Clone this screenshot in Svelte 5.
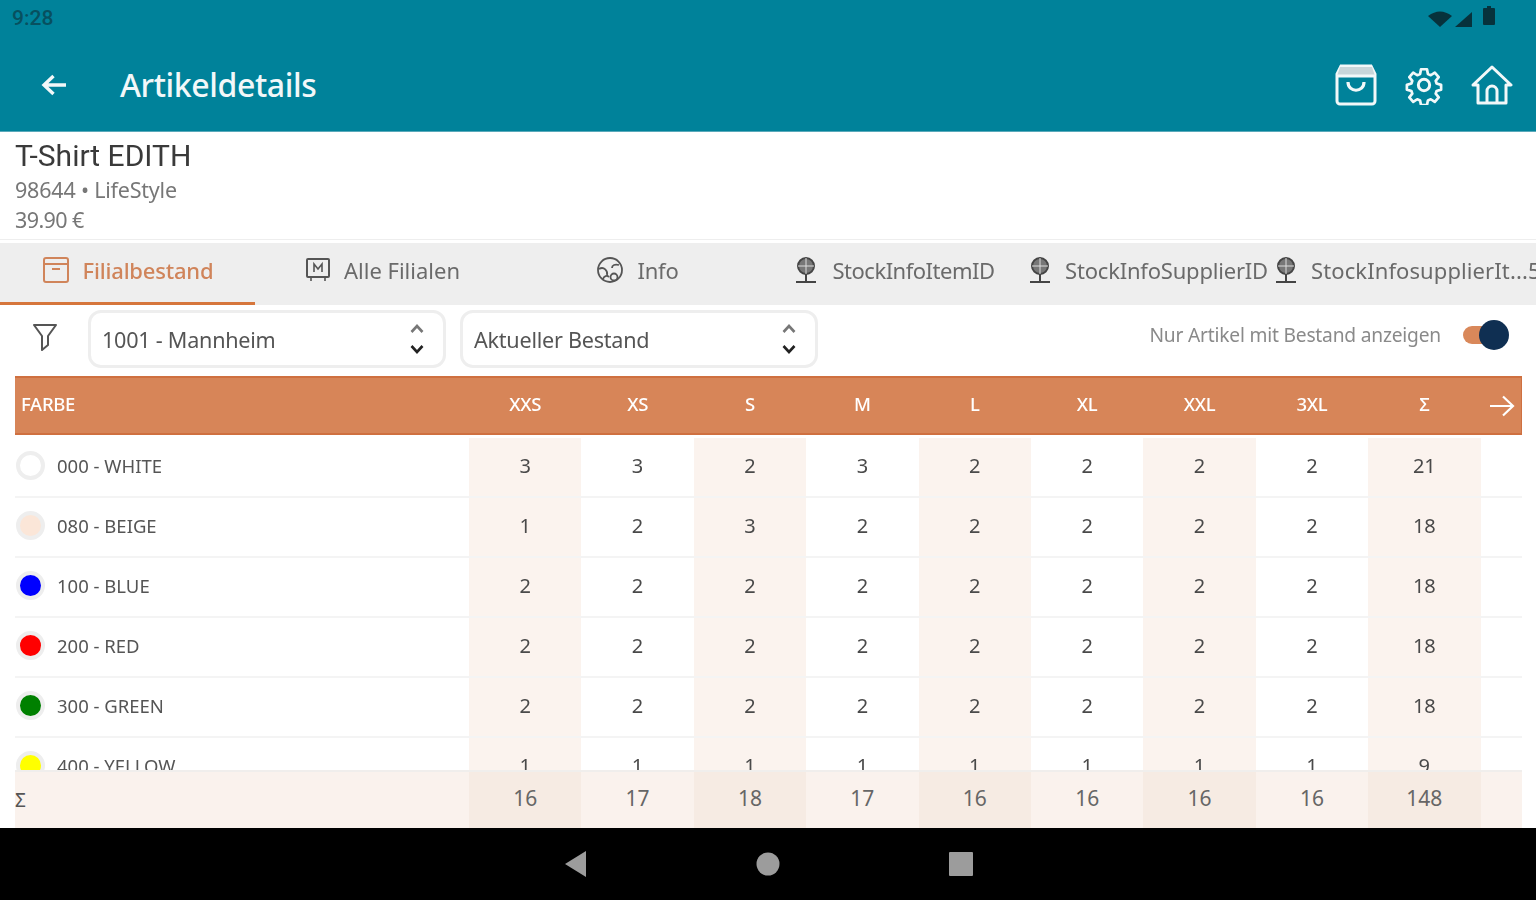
<script>
  const sizes = ['XXS','XS','S','M','L','XL','XXL','3XL','Σ'];
  const rows = [
    { name:'000 - WHITE', color:'#ffffff', vals:[3,3,2,3,2,2,2,2,21] },
    { name:'080 - BEIGE', color:'#fbe6d8', vals:[1,2,3,2,2,2,2,2,18] },
    { name:'100 - BLUE', color:'#0000ff', vals:[2,2,2,2,2,2,2,2,18] },
    { name:'200 - RED', color:'#ff0000', vals:[2,2,2,2,2,2,2,2,18] },
    { name:'300 - GREEN', color:'#008000', vals:[2,2,2,2,2,2,2,2,18] },
    { name:'400 - YELLOW', color:'#ffff00', vals:[1,1,1,1,1,1,1,1,9] }
  ];
  const totals = [16,17,18,17,16,16,16,16,148];
  const tabs = [
    { label:'Filialbestand', icon:'box', cls:'t1' },
    { label:'Alle Filialen', icon:'board', cls:'t2' },
    { label:'Info', icon:'info', cls:'t3' },
    { label:'StockInfoItemID', icon:'globe', cls:'t4' },
    { label:'StockInfoSupplierID', icon:'globe', cls:'t5' },
    { label:'StockInfosupplierIt...5', icon:'globe', cls:'t6' }
  ];
</script>

<div class="page">
  <header class="appbar">
    <div class="status">
      <span class="time">9:28</span>
      <div class="sysicons">
        <svg class="wifi" width="24" height="16" viewBox="0 0 24 16"><path d="M0 5 Q12 -4 24 5 L12 16Z" fill="#07323c"/></svg>
        <svg class="wifi" width="17" height="15" viewBox="0 0 17 15"><path d="M0 15 L17 0 V15Z" fill="#07323c"/></svg>
        <svg class="batt" width="12" height="19" viewBox="0 0 12 19"><path d="M4 0h4v2h3a1 1 0 0 1 1 1v15a1 1 0 0 1-1 1H1a1 1 0 0 1-1-1V3a1 1 0 0 1 1-1h3Z" fill="#07323c"/></svg>
      </div>
    </div>
    <div class="bar">
      <svg class="back" width="26" height="24" viewBox="0 0 26 24" fill="none" stroke="#f2f8f9" stroke-width="3.4"><path d="M25 12H3M12.500 3 3 12l9.500 9"/></svg>
      <h1>Artikeldetails</h1>
      <div class="actions">
        <svg width="42" height="42" viewBox="0 0 42 42" fill="none" stroke="#f2f8f9" stroke-width="3"><path d="M6 2h30l4 8v27a3 3 0 0 1-3 3H5a3 3 0 0 1-3-3V10Z"/><path d="M5 3h32l3 9H2Z" fill="#c8d6da" stroke="none"/><path d="M2 12h38"/><path d="M13 18c0 11 16 11 16 0" stroke-width="3.200"/></svg>
        <svg width="40" height="40" viewBox="0 0 24 24" fill="none" stroke="#f2f8f9" stroke-width="1.800" stroke-linejoin="round"><circle cx="12" cy="12" r="3.400"/><path d="M10 1.500h4l.6 3.200 1.900.8 2.700-1.800 2.600 3-2 2.500.6 1.800 3 .9v3.200l-3 .9-.6 1.800 2 2.500-2.600 3-2.700-1.800-1.900.8-.6 3.100h-4l-.6-3.100-1.900-.8-2.700 1.800-2.600-3 2-2.500-.6-1.800-3-.9v-3.200l3-.9.6-1.800-2-2.500 2.600-3 2.700 1.800 1.900-.8Z" transform="translate(1.200 1.200) scale(.9)"/></svg>
        <svg width="42" height="42" viewBox="0 0 42 42" fill="none" stroke="#f2f8f9" stroke-width="3" stroke-linejoin="round"><path d="M2 21 21 3l19 18h-5v18H7V21Z"/><path d="M16 39V27a5 5 0 0 1 10 0v12"/></svg>
      </div>
    </div>
  </header>

  <section class="article">
    <div class="title">T-Shirt EDITH</div>
    <div class="sub">98644 • LifeStyle</div>
    <div class="sub price">39.90 €</div>
  </section>

  <nav class="tabs">
    {#each tabs as t, i}
      <div class="tab {t.cls}" class:active={i === 0}>
        {#if t.icon === 'box'}
          <svg width="28" height="28" viewBox="0 0 28 28" fill="none" stroke="currentColor" stroke-width="2"><rect x="2" y="2" width="24" height="24" rx="2"/><path d="M2 8h24M10 13h8"/></svg>
        {:else if t.icon === 'board'}
          <svg width="26" height="26" viewBox="0 0 26 26" fill="none" stroke="#555" stroke-width="2"><rect x="2" y="2" width="22" height="18" rx="1"/><path d="M9 15V7l4 5 4-5v8M6 21v3M20 21v3" stroke-width="1.600"/></svg>
        {:else if t.icon === 'info'}
          <svg width="28" height="28" viewBox="0 0 28 28" fill="none" stroke="#555" stroke-width="1.800"><circle cx="14" cy="14" r="12"/><path d="M3 13c5-3 9 2 8 6M7 23c1-3 4-4 6-2M23 9c-4-1-7 0-7 3"/><circle cx="18" cy="21" r="3.500"/></svg>
        {:else}
          <svg width="24" height="28" viewBox="0 0 24 28" fill="none" stroke="#444" stroke-width="2"><circle cx="12" cy="10" r="8" fill="#777"/><path d="M12 2v16M4 10h16" stroke="#ddd" stroke-width="1"/><path d="M12 18v7M2 26h20"/></svg>
        {/if}
        <span>{t.label}</span>
      </div>
    {/each}
  </nav>

  <div class="filters">
    <svg class="funnel" width="26" height="28" viewBox="0 0 26 28" fill="none" stroke="#555" stroke-width="2" stroke-linejoin="round"><path d="M2 2h22l-8 11v9l-6 5V13Z"/></svg>
    <div class="select"><span>1001 - Mannheim</span>
      <svg width="14" height="32" viewBox="0 0 14 32" fill="none" stroke-width="2.600"><path d="M1.500 9 7 3l5.500 6" stroke="#777"/><path d="M1.500 23 7 29l5.500-6" stroke="#222"/></svg>
    </div>
    <div class="select"><span>Aktueller Bestand</span>
      <svg width="14" height="32" viewBox="0 0 14 32" fill="none" stroke-width="2.600"><path d="M1.500 9 7 3l5.500 6" stroke="#777"/><path d="M1.500 23 7 29l5.500-6" stroke="#222"/></svg>
    </div>
    <div class="stock">
      <span>Nur Artikel mit Bestand anzeigen</span>
      <div class="toggle"><i></i></div>
    </div>
  </div>

  <div class="table">
    <div class="grid head">
      <div class="first">FARBE</div>
      {#each sizes as s}<div class="c">{s}</div>{/each}
      <svg class="more" width="26" height="22" viewBox="0 0 26 22" fill="none" stroke="#fff" stroke-width="2.200"><path d="M1 11h23M14 1.500 24 11l-10 9.500"/></svg>
    </div>
    <div class="body">
      {#each rows as r}
        <div class="grid row">
          <div class="first colour">
            <span class="dot" style="background:{r.color}"></span>{r.name}
          </div>
          {#each r.vals as v, i}<div class="c val" class:tint={i % 2 === 0}>{v}</div>{/each}
          <div></div>
        </div>
      {/each}
    </div>
    <div class="grid foot">
      <div class="first sigma">Σ</div>
      {#each totals as v, i}<div class="c val" class:tint={i % 2 === 0}>{v}</div>{/each}
      <div></div>
    </div>
  </div>

  <footer class="sysnav">
    <svg width="22" height="26" viewBox="0 0 22 26"><path d="M21 0V26L0 13Z" fill="#9c9c9c"/></svg>
    <svg width="24" height="24" viewBox="0 0 24 24"><circle cx="12" cy="12" r="11.500" fill="#9c9c9c"/></svg>
    <svg width="24" height="24" viewBox="0 0 24 24"><rect width="24" height="24" rx="1" fill="#9c9c9c"/></svg>
  </footer>
</div>

<style>
  :global(body) { margin: 0; background: #fff; overflow: hidden; }
  .page {
    width: 1536px; height: 900px; display: flex; flex-direction: column; overflow: hidden;
    font-family: "Noto Sans", "Open Sans", sans-serif; color: #333; filter: blur(.7px);
  }
  .appbar { height: 132px; background: #00829a; flex: none; border-bottom: 1px solid #5aa9ba; box-sizing: border-box; }
  .status { height: 36px; display: flex; justify-content: space-between; align-items: center; padding: 0 41px 0 12px; }
  .time { font: 500 21px "Roboto", sans-serif; color: #07505f; }
  .sysicons { display: flex; align-items: flex-end; gap: 3px; }
  .wifi { margin-bottom: 3px; }
  .batt { margin-left: 8px; margin-bottom: 5px; }
  .bar { height: 95px; display: flex; align-items: center; padding: 2px 23px 0 41px; box-sizing: border-box; }
  .back { flex: none; }
  h1 { margin: 0 0 0 53px; font: 500 32px "Noto Sans", sans-serif; color: #f2f8f9; letter-spacing: -.4px; }
  .actions { margin-left: auto; display: flex; align-items: center; gap: 27px; }
  .article { height: 108px; flex: none; padding: 5px 15px 0; box-sizing: border-box; border-bottom: 1px solid #eee; }
  .title { font: 30px/38px "Roboto", sans-serif; color: #3a3a3a; }
  .sub { font: 21.500px/30px "Noto Sans", sans-serif; color: #777; letter-spacing: -.2px; }
  .price { letter-spacing: -.6px; }
  .tabs { margin-top: 3px; height: 62px; flex: none; background: #eeeeee; display: flex; overflow: hidden; color: #6a6a6a; font-size: 22px; letter-spacing: -.2px; }
  .tab { flex: none; width: 255px; box-sizing: border-box; display: flex; align-items: center; justify-content: center; gap: 13px; white-space: nowrap; padding-bottom: 6px; border-bottom: 3px solid transparent; }
  .tab svg { flex: none; }
  .t2 { letter-spacing: 0; }
  .t4 { letter-spacing: -.5px; gap: 15px; padding-left: 3px; }
  .t5 { width: 252px; padding-left: 4px; }
  .t6 { justify-content: flex-start; padding-left: 2px; width: 290px; gap: 13px; letter-spacing: .1px; }
  .active { color: #d0845a; border-bottom-color: #d6763c; font-weight: 500; }
  .filters { height: 71px; flex: none; display: flex; align-items: center; padding: 0 36px 3px 32px; box-sizing: border-box; }
  .funnel { margin-right: 30px; margin-bottom: 4px; }
  .select { width: 358px; height: 58px; box-sizing: border-box; margin-right: 14px; border: 3px solid #eeeeee; border-radius: 13px; display: flex; align-items: center; justify-content: space-between; padding: 0 19px 0 11px; font-size: 21.600px; color: #555; letter-spacing: -.25px; }
  .stock { margin-left: auto; display: flex; align-items: center; gap: 22px; font-size: 19.200px; color: #8a8a8a; letter-spacing: -.2px; margin-bottom: 9px; }
  .toggle { width: 37px; height: 18px; background: #d9885a; border-radius: 9px; position: relative; }
  .toggle i { position: absolute; width: 30px; height: 30px; border-radius: 50%; background: #0f2f52; right: -9px; top: -6px; }
  .table { margin: 0 14px 0 15px; flex: 1; min-height: 0; display: flex; flex-direction: column; }
  .grid { display: grid; grid-template-columns: 454px repeat(9, 112.4px) 1fr; align-items: stretch; }
  .head { height: 59px; flex: none; background: #d78558; border: solid #cf7040; border-width: 2px 1px 2px 0; box-sizing: border-box; color: #fff; font-size: 18.500px; font-weight: 500; letter-spacing: -.3px; margin-bottom: 3px; align-items: center; padding-bottom: 4px; }
  .first { padding-left: 6px; }
  .c { text-align: center; }
  .more { justify-self: end; margin-right: 6px; margin-top: 4px; }
  .body { flex: 1; min-height: 0; overflow: hidden; }
  .row { height: 60px; box-sizing: border-box; border-bottom: 2px solid #f4f4f4; }
  .colour { display: flex; align-items: center; gap: 12px; padding-left: 1px; padding-bottom: 3px; font-size: 18.500px; color: #555; letter-spacing: 0; }
  .dot { width: 29px; height: 29px; border-radius: 50%; border: 4px solid #eeeeee; box-sizing: border-box; flex: none; background-clip: padding-box; }
  .val { display: flex; align-items: center; justify-content: center; font-size: 20px; color: #4a4a4a; padding-bottom: 3px; }
  .tint { background: #fbf3ee; }
  .foot { height: 58px; flex: none; background: #faf2ed; border-top: 2px solid #f0eeec; box-sizing: border-box; }
  .foot .val { font-size: 21px; color: #666; padding-bottom: 4px; padding-top: 0; }
  .foot .tint { background: #f6ebe3; }
  .sigma { padding-left: 0; display: flex; align-items: center; font-size: 19px; color: #555; }
  .sysnav { height: 72px; flex: none; background: #000; display: flex; align-items: center; justify-content: center; gap: 169px; padding-left: 2px; }
</style>
